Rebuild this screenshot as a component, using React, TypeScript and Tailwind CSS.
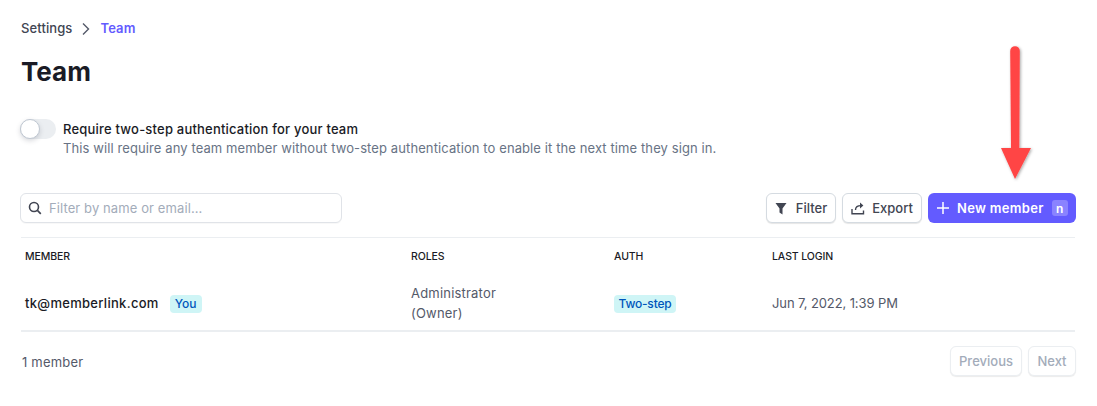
import React from "react";

function Arrow() {
  return (
    <svg className="absolute left-[990px] top-[40px]" width="50" height="150" viewBox="0 0 50 150" fill="none">
      <defs>
        <filter id="s" x="-30%" y="-10%" width="160%" height="120%">
          <feDropShadow dx="1" dy="1" stdDeviation="1.5" floodColor="#000" floodOpacity="0.35" />
        </filter>
      </defs>
      <path
        d="M20.2 11 A4.8 4.8 0 0 1 29.8 11 L29.3 108 H41 L25 139 L11 108 H21 Z"
        fill="#ff4545"
        filter="url(#s)"
      />
    </svg>
  );
}

function Badge({ children, className }: { children: React.ReactNode; className: string }) {
  return (
    <span className={"inline-flex h-[18px] items-center justify-center rounded-[4px] bg-[#cff5f6] text-[12px] font-medium text-[#0055bc] " + className}>
      {children}
    </span>
  );
}

export default function App() {
  return (
    <div className="relative h-[406px] w-[1097px] overflow-hidden bg-white px-[21px] font-['Inter',sans-serif] text-[#1a1b25]">
      <nav className="mt-[19px] flex h-[20px] items-center text-[13px] font-medium tracking-[0.1px]">
        <span className="text-[#414552]">Settings</span>
        <svg className="mx-[8px]" width="12" height="14" viewBox="0 0 12 14" fill="none">
          <path d="M3 1.5 L8.5 7 L3 12.5" stroke="#545969" strokeWidth="1.4" />
        </svg>
        <span className="font-semibold text-[#635bff]">Team</span>
      </nav>

      <h1 className="mt-[15px] text-[26px] leading-[36px] font-bold text-[#1a1b25]">Team</h1>

      <div className="mt-[30px] flex items-start gap-[7px]">
        <div className="relative -mt-px -ml-[1px] h-[20px] w-[36px] rounded-full bg-[#ebeef1]">
          <span className="absolute left-0 top-0 h-[20px] w-[20px] rounded-full border border-[#c0c8d2] bg-white shadow-[0_2px_5px_rgba(60,66,87,0.2)]" />
        </div>
        <div>
          <div className="text-[13px] leading-[19px] font-medium tracking-[0.2px] text-[#1a1b25]">
            Require two-step authentication for your team
          </div>
          <div className="text-[13px] leading-[19px] tracking-[0.1px] text-[#687385]">
            This will require any team member without two-step authentication to enable it the next time they sign in.
          </div>
        </div>
      </div>

      <div className="mt-[35px] flex items-center justify-between">
        <div className="-ml-[1px] flex h-[30px] w-[322px] items-center gap-[6px] rounded-[6px] border border-[#e0e3e8] bg-white pl-[8px] text-[13px] tracking-[0.1px] text-[#a3acba] shadow-[0_1px_1px_rgba(0,0,0,0.03)]">
          <svg className="-ml-[1px]" width="14" height="14" viewBox="0 0 14 14" fill="none">
            <circle cx="6" cy="6" r="4.5" stroke="#414552" strokeWidth="1.6" />
            <path d="M9.4 9.4 L12.8 12.8" stroke="#414552" strokeWidth="1.7" />
          </svg>
          <span className="ml-px pt-[2px]">Filter by name or email...</span>
        </div>
        <div className="flex items-center gap-[6px]">
          <button className="flex h-[30px] w-[70px] items-center justify-center gap-[9px] rounded-[6px] border border-[#d5dbe1] bg-white text-[13px] font-medium text-[#414552] shadow-[0_1px_1px_rgba(0,0,0,0.1)]">
            <svg width="12" height="13" viewBox="0 0 12 13">
              <path d="M0.5 1 H11.5 L7.5 6.5 V12.5 L4.5 10.5 V6.5 Z" fill="#414552" />
            </svg>
            <span className="pt-[2px]">Filter</span>
          </button>
          <button className="flex h-[30px] w-[80px] items-center justify-center gap-[7px] rounded-[6px] border border-[#d5dbe1] bg-white text-[13px] font-medium text-[#414552] shadow-[0_1px_1px_rgba(0,0,0,0.1)]">
            <svg width="14" height="13" viewBox="0 0 14 13" fill="none">
              <path d="M1 7 V11.7 H12.5 V8.5" stroke="#414552" strokeWidth="1.4" />
              <path d="M4.5 8 C4.5 5 6.5 3.6 10 3.6" stroke="#414552" strokeWidth="1.4" />
              <path d="M9 0.6 L12.4 3.6 L9 6.6 Z" fill="#414552" />
            </svg>
            <span className="pt-[2px]">Export</span>
          </button>
          <button className="flex h-[30px] w-[148px] items-center rounded-[6px] bg-[#635bff] pl-[9px] text-[13px] font-semibold text-white">
            <svg width="12" height="12" viewBox="0 0 12 12" fill="none">
              <path d="M6 0 V12 M0 6 H12" stroke="white" strokeWidth="1.5" />
            </svg>
            <span className="ml-[8px] pt-[2px] tracking-[0.3px]">New member</span>
            <span className="ml-[8px] flex h-[16px] w-[16px] items-center justify-center rounded-[3px] bg-[#8a83ff] pt-[2px] text-[12px] leading-none">
              n
            </span>
          </button>
        </div>
      </div>

      <div className="mt-[14px] w-[1054px] border-t border-[#ebeef1]">
        <div className="grid h-[38px] grid-cols-[386px_203px_158px_1fr] items-center pl-[4px] text-[10.5px] font-medium tracking-[-0.1px] text-[#1a1b25] uppercase">
          <span>Member</span>
          <span>Roles</span>
          <span>Auth</span>
          <span>Last login</span>
        </div>
        <div className="grid h-[56px] grid-cols-[386px_203px_158px_1fr] items-center border-b-2 border-[#ebeef1] pl-[4px] text-[13px]">
          <div className="flex items-center gap-[11px] pt-[2px]">
            <span className="font-medium tracking-[0.3px] text-[#1a1b25]">tk@memberlink.com</span>
            <Badge className="w-[32px]">You</Badge>
          </div>
          <div className="leading-[20px] tracking-[0.2px] text-[#545969]">
            Administrator
            <br />
            (Owner)
          </div>
          <div className="pt-[2px]">
            <Badge className="w-[62px] tracking-[-0.2px]">Two-step</Badge>
          </div>
          <div className="pt-[2px] tracking-[-0.1px] text-[#545969]">Jun 7, 2022, 1:39 PM</div>
        </div>
      </div>

      <div className="mt-[14px] flex w-[1055px] items-center justify-between">
        <span className="pl-px pt-[4px] text-[13px] tracking-[0.2px] text-[#545969]">1 member</span>
        <div className="flex gap-[6px]">
          <button className="h-[30px] w-[72px] rounded-[6px] border border-[#ebeef1] bg-white pt-[2px] text-[13px] font-medium text-[#a3acba] shadow-[0_1px_1px_rgba(0,0,0,0.08)]">
            Previous
          </button>
          <button className="h-[30px] w-[48px] rounded-[6px] border border-[#ebeef1] bg-white pt-[2px] text-[13px] font-medium text-[#a3acba] shadow-[0_1px_1px_rgba(0,0,0,0.08)]">
            Next
          </button>
        </div>
      </div>

      <Arrow />
    </div>
  );
}
